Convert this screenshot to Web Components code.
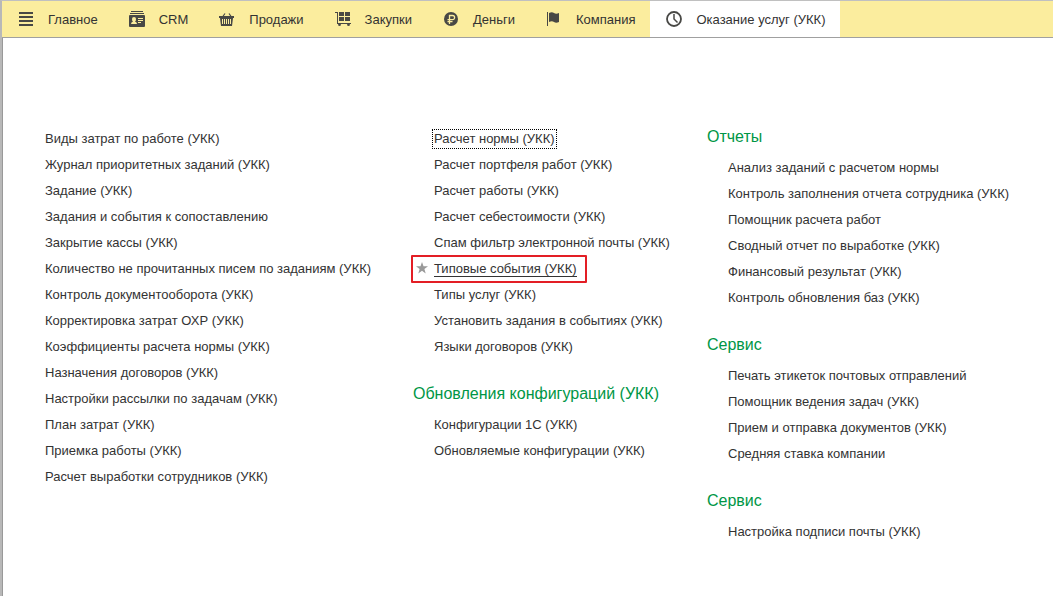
<!DOCTYPE html>
<html lang="ru">
<head>
<meta charset="utf-8">
<title>Оказание услуг (УКК)</title>
<style>
body { margin: 0; background: #fff; color: #333; font: 13px/26px "Liberation Sans", Arial, sans-serif; }
</style>
</head>
<body>
<app-shell>
  <section-tab slot="tabs" icon="menu">Главное</section-tab>
  <section-tab slot="tabs" icon="crm">CRM</section-tab>
  <section-tab slot="tabs" icon="basket">Продажи</section-tab>
  <section-tab slot="tabs" icon="cart">Закупки</section-tab>
  <section-tab slot="tabs" icon="money">Деньги</section-tab>
  <section-tab slot="tabs" icon="flag">Компания</section-tab>
  <section-tab slot="tabs" icon="clock" active>Оказание услуг (УКК)</section-tab>

  <menu-column>
    <menu-group>
      <menu-link>Виды затрат по работе (УКК)</menu-link>
      <menu-link>Журнал приоритетных заданий (УКК)</menu-link>
      <menu-link>Задание (УКК)</menu-link>
      <menu-link>Задания и события к сопоставлению</menu-link>
      <menu-link>Закрытие кассы (УКК)</menu-link>
      <menu-link>Количество не прочитанных писем по заданиям (УКК)</menu-link>
      <menu-link>Контроль документооборота (УКК)</menu-link>
      <menu-link>Корректировка затрат ОХР (УКК)</menu-link>
      <menu-link>Коэффициенты расчета нормы (УКК)</menu-link>
      <menu-link>Назначения договоров (УКК)</menu-link>
      <menu-link>Настройки рассылки по задачам (УКК)</menu-link>
      <menu-link>План затрат (УКК)</menu-link>
      <menu-link>Приемка работы (УКК)</menu-link>
      <menu-link>Расчет выработки сотрудников (УКК)</menu-link>
    </menu-group>
  </menu-column>
  <menu-column>
    <menu-group>
      <menu-link focused>Расчет нормы (УКК)</menu-link>
      <menu-link>Расчет портфеля работ (УКК)</menu-link>
      <menu-link>Расчет работы (УКК)</menu-link>
      <menu-link>Расчет себестоимости (УКК)</menu-link>
      <menu-link>Спам фильтр электронной почты (УКК)</menu-link>
      <menu-link marked>Типовые события (УКК)</menu-link>
      <menu-link>Типы услуг (УКК)</menu-link>
      <menu-link>Установить задания в событиях (УКК)</menu-link>
      <menu-link>Языки договоров (УКК)</menu-link>
    </menu-group>
    <menu-group heading="Обновления конфигураций (УКК)">
      <menu-link>Конфигурации 1С (УКК)</menu-link>
      <menu-link>Обновляемые конфигурации (УКК)</menu-link>
    </menu-group>
  </menu-column>
  <menu-column>
    <menu-group heading="Отчеты">
      <menu-link>Анализ заданий с расчетом нормы</menu-link>
      <menu-link>Контроль заполнения отчета сотрудника (УКК)</menu-link>
      <menu-link>Помощник расчета работ</menu-link>
      <menu-link>Сводный отчет по выработке (УКК)</menu-link>
      <menu-link>Финансовый результат (УКК)</menu-link>
      <menu-link>Контроль обновления баз (УКК)</menu-link>
    </menu-group>
    <menu-group heading="Сервис">
      <menu-link>Печать этикеток почтовых отправлений</menu-link>
      <menu-link>Помощник ведения задач (УКК)</menu-link>
      <menu-link>Прием и отправка документов (УКК)</menu-link>
      <menu-link>Средняя ставка компании</menu-link>
    </menu-group>
    <menu-group heading="Сервис">
      <menu-link>Настройка подписи почты (УКК)</menu-link>
    </menu-group>
  </menu-column>
</app-shell>

<script>
const ICONS = {
  menu: '<path d="M1 1h14v2H1zM1 5h14v2H1zM1 9h14v2H1zM1 13h14v2H1z" shape-rendering="crispEdges"/>',
  crm: '<path d="M2 0h12v1H2zM1 2h14v1H1z"/><path fill-rule="evenodd" d="M1 4h14q1 0 1 1v10q0 1-1 1H1q-1 0-1-1V5q0-1 1-1zM5 6q-2 0-2 2t1 2.500Q2 11 2 13h6q0-2-2-2.500Q7 10 7 8T5 6zM9 7h5v1H9zM9 9h5v1H9zM9 11h3v1H9z"/>',
  basket: '<path d="M3.500 6 6 2.500M12.500 6 10 2.500" fill="none" stroke="currentColor" stroke-width="1.200"/><path fill-rule="evenodd" d="M0 5h15v2h-1l-1 8H2L1 7H0zM3 8v5h1V8zM5 8v5h1V8zM7 8v5h1V8zM9 8v5h1V8zM11 8v5h1V8z"/>',
  cart: '<path d="M0 1h3v11h13v1H2V2H0zM4 1h5v4H4zM10 1h5v4h-5zM4 6h5v4H4zM10 6h5v4h-5z" shape-rendering="crispEdges"/><circle cx="4.500" cy="13.700" r="1.400"/><circle cx="13.500" cy="13.700" r="1.400"/>',
  money: '<circle cx="8" cy="8" r="7"/><path d="M6.500 13V4.500h3a2 2 0 0 1 0 4.200H4.500M4.500 10.700h5" fill="none" stroke="#fbed9e" stroke-width="1.300"/>',
  flag: '<path d="M1 1h1v14H1zM3 2q3-1.500 5 0t5 0v9q-3 1.500-5 0t-5 0z"/>',
  clock: '<circle cx="8" cy="8" r="7" fill="none" stroke="currentColor" stroke-width="1.800"/><path d="M8 3v5l3.500 3.500" fill="none" stroke="currentColor" stroke-width="1.500"/>'
};

class AppShell extends HTMLElement {
  constructor() {
    super();
    this.attachShadow({ mode: 'open' }).innerHTML = `
      <style>
        :host { display: flex; flex-direction: column; min-height: 100vh; box-sizing: border-box;
          border-top: 1px solid #c0c0c0; border-left: 2px solid #b8b8b8; }
        nav { display: flex; height: 36px; background: #fbed9e; border-bottom: 1px solid #a0a0a0; }
        main { flex: 1; display: grid; grid-template-columns: minmax(0, 389fr) minmax(0, 294fr) minmax(0, 325fr);
          align-items: start; padding: 88px 21px 24px; border-left: 1px solid #999; }
      </style>
      <nav><slot name="tabs"></slot></nav>
      <main><slot></slot></main>`;
  }
}

class SectionTab extends HTMLElement {
  constructor() {
    super();
    this.attachShadow({ mode: 'open' }).innerHTML = `
      <style>
        :host { display: flex; flex: none; }
        :host([active]) { background: #fff; }
        button { display: flex; align-items: center; gap: 14px; padding: 0 15px 0 16px; border: 0;
          background: none; color: inherit; font: inherit; white-space: nowrap; }
        svg { width: 16px; height: 16px; fill: currentColor; color: #484845; }
        span { padding-top: 2px; }
      </style>
      <button type="button"><svg viewBox="0 0 16 16" aria-hidden="true">${ICONS[this.getAttribute('icon')]}</svg><span><slot></slot></span></button>`;
  }
}

class MenuColumn extends HTMLElement {
  constructor() {
    super();
    this.attachShadow({ mode: 'open' }).innerHTML = `
      <style>
        :host { display: flex; flex-direction: column; gap: 23px; }
      </style>
      <slot></slot>`;
  }
}

class MenuGroup extends HTMLElement {
  constructor() {
    super();
    const heading = this.getAttribute('heading');
    this.attachShadow({ mode: 'open' }).innerHTML = `
      <style>
        :host { display: block; }
        h2 { margin: 0 0 7px; color: #009646; font-size: 16px; font-weight: 400; line-height: 22px; white-space: nowrap; }
        div { padding-left: 21px; }
      </style>
      ${heading ? `<h2>${heading}</h2>` : ''}
      <div><slot></slot></div>`;
  }
}

class MenuLink extends HTMLElement {
  constructor() {
    super();
    const star = this.hasAttribute('marked')
      ? '<svg viewBox="0 0 12 12" aria-hidden="true"><path d="M6 0l1.500 4.200H12L8.400 6.900 9.700 11.500 6 8.800 2.300 11.500 3.600 6.900 0 4.200h4.500z"/></svg>' : '';
    this.attachShadow({ mode: 'open' }).innerHTML = `
      <style>
        :host { display: flex; align-items: center; height: 26px; width: max-content; position: relative; white-space: nowrap; }
        a { color: inherit; text-decoration: none; line-height: 16px; }
        :host([focused]) a { outline: 1px dotted #000; outline-offset: 1px; }
        :host([marked]) a { line-height: 15px; border-bottom: 1px solid #333; }
        :host([marked])::after { content: ""; position: absolute; inset: -1px -10px -1px -23px; border: 2px solid #e31e25; border-radius: 1px; }
        svg { position: absolute; left: -18px; top: 6px; width: 12px; height: 12px; fill: #999; }
      </style>
      ${star}<a href="#"><slot></slot></a>`;
  }
}

customElements.define('app-shell', AppShell);
customElements.define('section-tab', SectionTab);
customElements.define('menu-column', MenuColumn);
customElements.define('menu-group', MenuGroup);
customElements.define('menu-link', MenuLink);
</script>
</body>
</html>
